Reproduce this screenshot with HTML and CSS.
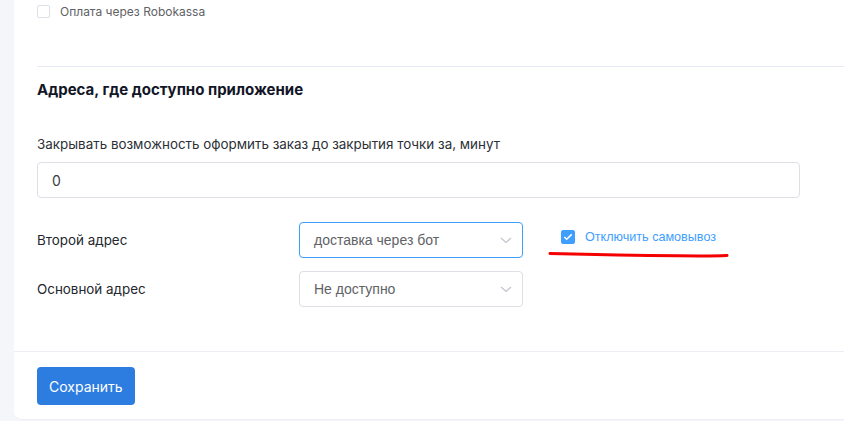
FILE: index.html
```html
<!DOCTYPE html>
<html lang="ru">
<head>
  <meta charset="UTF-8" />
  <meta name="viewport" content="width=device-width, initial-scale=1.0"/>
  <title>Настройки приложения</title>
  <link rel="stylesheet" href="styles.css">
</head>
<body>

<div class="card">
  <div class="card-body">
    <label class="check-line">
      <span class="check-box"></span>
      <span class="check-text">Оплата через Robokassa</span>
    </label>

    <div class="section">
      <h3 class="section-title">Адреса, где доступно приложение</h3>

      <div class="form-group">
        <div class="form-label">Закрывать возможность оформить заказ до закрытия точки за, минут</div>
        <div class="text-input">0</div>
      </div>

      <div class="form-row">
        <div class="row-label">Второй адрес</div>
        <div class="select is-focus">
          <span>доставка через бот</span>
          <svg class="arrow" width="12" height="7" viewBox="0 0 12 7"><path d="M1 1l5 4.5L11 1" fill="none" stroke="#c0c4cc" stroke-width="1.2"/></svg>
        </div>
        <label class="option">
          <span class="check-box checked">
            <svg width="10" height="8" viewBox="0 0 10 8"><path d="M1.3 4l2.4 2.3L8.7 1.4" fill="none" stroke="#fff" stroke-width="1.5"/></svg>
          </span>
          <span class="option-text">Отключить самовывоз</span>
          <svg class="mark" width="184" height="10" viewBox="0 0 184 10"><path d="M2 4.5C40 5.5 90 6.5 130 6.8S170 7 179 6.4" fill="none" stroke="#f50000" stroke-width="3" stroke-linecap="round"/></svg>
        </label>
      </div>

      <div class="form-row">
        <div class="row-label">Основной адрес</div>
        <div class="select">
          <span>Не доступно</span>
          <svg class="arrow" width="12" height="7" viewBox="0 0 12 7"><path d="M1 1l5 4.5L11 1" fill="none" stroke="#c0c4cc" stroke-width="1.2"/></svg>
        </div>
      </div>
    </div>
  </div>

  <div class="card-footer">
    <button class="save-button">Сохранить</button>
  </div>
</div>

</body>
</html>
```

FILE: styles.css
```css
* {
  box-sizing: border-box;
}

body {
  margin: 0;
  padding-left: 14px;
  background: #f5f6fa;
  font-family: Inter, 'Noto Sans', sans-serif;
  overflow: hidden;
}

.card {
  width: 860px;
  background: #fff;
  border-radius: 0 0 8px 8px;
  border-bottom: 1px solid #eceef3;
}

.card-body {
  padding: 3px 0 44px 23px;
}

.check-line {
  display: flex;
  align-items: center;
  gap: 10px;
  height: 16px;
}

.check-box {
  width: 13px;
  height: 13px;
  border: 1px solid #dcdfe6;
  border-radius: 2px;
  background: #fff;
  display: flex;
  align-items: center;
  justify-content: center;
}

.check-box.checked {
  width: 14px;
  height: 14px;
  background: #409eff;
  border-color: #409eff;
}

.check-text {
  font-size: 12px;
  color: #606266;
}

.section {
  margin-top: 47px;
  border-top: 1px solid #e4e9f5;
}

.section-title {
  margin: 13px 0 0;
  font-size: 15px;
  line-height: 20px;
  font-weight: 700;
  color: #121627;
}

.form-group {
  margin-top: 34px;
  width: 763px;
}

.form-label {
  font-size: 13.4px;
  line-height: 20px;
  color: #2c2f36;
  margin-bottom: 8px;
}

.text-input {
  height: 36px;
  border: 1px solid #dcdfe6;
  border-radius: 4px;
  padding: 0 14px;
  display: flex;
  align-items: center;
  font-size: 14px;
  color: #3a3d44;
}

.form-row {
  display: flex;
  align-items: center;
  margin-top: 24px;
}

.form-row + .form-row {
  margin-top: 13px;
}

.row-label {
  width: 262px;
  font-size: 13.4px;
  color: #23262d;
}

.select {
  width: 224px;
  height: 36px;
  border: 1px solid #dcdfe6;
  border-radius: 4px;
  padding: 0 10px 0 14px;
  display: flex;
  align-items: center;
  justify-content: space-between;
  font-family: 'Liberation Sans', Arial, sans-serif;
  font-size: 14px;
  color: #606266;
}

.select.is-focus {
  border-color: #409eff;
}

.option {
  position: relative;
  display: flex;
  align-items: center;
  gap: 10px;
  margin-left: 38px;
  margin-top: -6px;
}

.option-text {
  font-family: 'Liberation Sans', Arial, sans-serif;
  font-size: 12.6px;
  color: #409eff;
}

/* red hand-drawn underline laid over the option */
.mark {
  position: absolute;
  left: -13px;
  top: 19px;
}

.card-footer {
  border-top: 1px solid #eceef3;
  padding: 15px 23px 14px;
}

.save-button {
  height: 38px;
  padding: 0 12px;
  background: #2d7de1;
  color: #fff;
  border: none;
  border-radius: 4px;
  font-family: Inter, 'Noto Sans', sans-serif;
  font-size: 14px;
  cursor: pointer;
}
```
